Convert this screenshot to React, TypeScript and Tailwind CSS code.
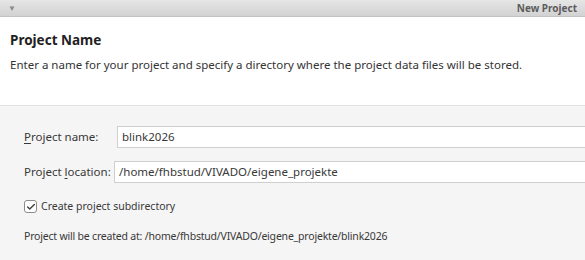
import { Check } from "lucide-react"

const rows = [
  { pre: "", u: "P", post: "roject name:", value: "blink2026" },
  { pre: "Project ", u: "l", post: "ocation:", value: "/home/fhbstud/VIVADO/eigene_projekte" },
]

const App = () => {
  return (
    <div
      className="w-[585px] h-[260px] overflow-hidden bg-[#f5f5f5] text-[#3c3c3c]"
      style={{ fontFamily: '"Noto Sans", "Open Sans", sans-serif' }}
    >
      {/* title bar */}
      <div className="h-[17px] flex items-center justify-between px-2 bg-gradient-to-b from-[#e6e6e6] to-[#d2d2d2] border-b border-[#c2c2c2]">
        <span className="text-[8px] text-[#8a8a8a] leading-none">▼</span>
        <span className="text-[10px] font-bold text-[#5c5c5c] leading-none">New Project</span>
      </div>

      {/* header */}
      <div className="bg-white h-[89px] border-b border-[#e2e2e2] px-[10px] pt-[14px]">
        <h1 className="text-[13.5px] font-bold text-[#222] leading-[18px]">Project Name</h1>
        <p className="text-[11.5px] text-[#333] leading-[16px] mt-[8px]">
          Enter a name for your project and specify a directory where the project data files will be stored.
        </p>
      </div>

      {/* form */}
      <div className="pl-[24px] pt-[20px] text-[11.5px] text-[#383838]">
        <div className="flex flex-col gap-[13px]">
          {rows.map((r, i) => (
            <div key={i} className="flex items-center">
              <span className={i === 0 ? "w-[93px]" : "w-[90px]"}>
                {r.pre}
                <span className="underline underline-offset-2">{r.u}</span>
                {r.post}
              </span>
              <div className="flex-1 h-[22px] bg-white border border-[#cfcfcf] border-r-0 flex items-center pl-[4px]">
                {r.value}
              </div>
            </div>
          ))}
        </div>

        <label className="flex items-center gap-[4px] mt-[16px] text-[10.5px]">
          <span className="w-[13px] h-[13px] rounded-[3px] border border-[#8c8c8c] bg-white flex items-center justify-center">
            <Check size={10} strokeWidth={3.5} className="text-[#444]" />
          </span>
          Create project subdirectory
        </label>

        <p className="mt-[14px] text-[10.5px] tracking-[-0.2px]">
          Project will be created at: /home/fhbstud/VIVADO/eigene_projekte/blink2026
        </p>
      </div>
    </div>
  )
}

export default App
